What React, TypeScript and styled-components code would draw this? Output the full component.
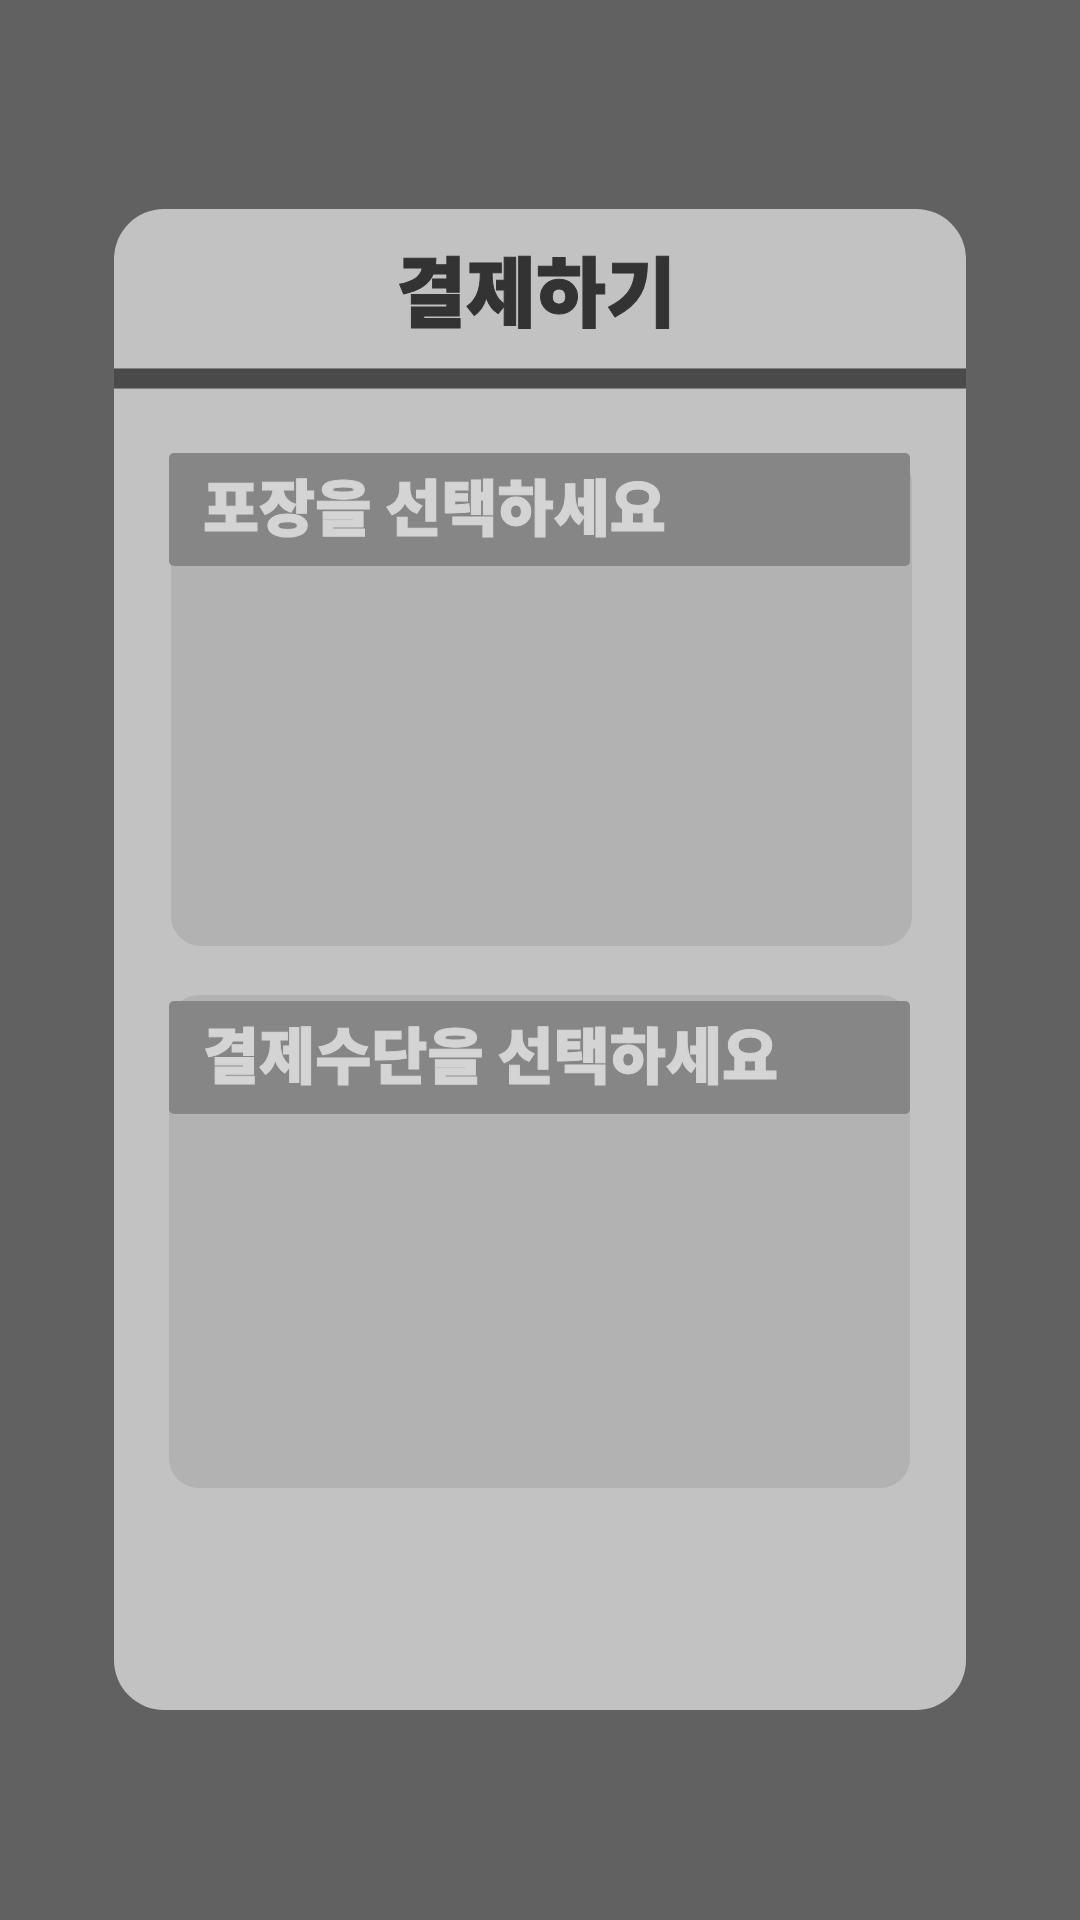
import React from "react";
import styled, { createGlobalStyle } from "styled-components";

const GlobalStyle = createGlobalStyle`
  *, *::before, *::after { box-sizing: border-box; }
  body {
    margin: 0;
    background: #616161;
    font-family: "Noto Sans CJK KR", "Noto Sans", sans-serif;
  }
`;

const Page = styled.main`
  display: flex;
  flex-direction: column;
  justify-content: center;
  min-height: 100vh;
  padding: 64px 114px 66px;
`;

const Dialog = styled.section`
  display: flex;
  flex-direction: column;
  padding-bottom: 222px;
  border-radius: 50px;
  background: #c2c2c2;
`;

const DialogHeader = styled.header`
  display: flex;
  align-items: center;
  justify-content: center;
  height: 159px;
  padding: 0 8px 0 0;
`;

const Divider = styled.hr`
  width: 100%;
  height: 21px;
  margin: 0;
  border: solid #808080;
  border-width: 1px 0;
  background: #4a4a4a;
`;

const Title = styled.h1`
  margin: 0;
  color: #333333;
  font-size: 76px;
  font-weight: 900;
  line-height: 112px;
  -webkit-text-stroke: 1px #333333;
`;

const Sections = styled.div`
  display: flex;
  flex-direction: column;
  gap: 49px;
  padding: 64px 56px 0 55px;
`;

const Panel = styled.section<{ $shift?: number; $inset?: number }>`
  min-height: 493px;
  margin: 0 -${({ $shift = 0 }) => $shift}px 0 ${({ $shift = 0 }) => $shift}px;
  padding: ${({ $inset = 0 }) => $inset}px ${({ $shift = 0 }) => $shift}px 0 0;
  border-radius: 30px;
  background: #b2b2b2;
`;

const PanelHeading = styled.h2<{ $shift?: number }>`
  width: calc(100% + ${({ $shift = 0 }) => $shift}px);
  margin: 0 0 0 -${({ $shift = 0 }) => $shift}px;
  padding: 8px 34px 17px;
  border-radius: 5px;
  background: #868686;
  color: #d4d4d4;
  font-size: 61px;
  font-weight: 900;
  line-height: 88px;
  -webkit-text-stroke: 1px #d4d4d4;
`;

export default function App() {
  return (
    <>
      <GlobalStyle />
      <Page>
        <Dialog aria-labelledby="payment-title">
          <DialogHeader>
            <Title id="payment-title">결제하기</Title>
          </DialogHeader>
          <Divider />
          <Sections>
            <Panel $shift={2} aria-labelledby="packing-title">
              <PanelHeading $shift={2} id="packing-title">
                포장을 선택하세요
              </PanelHeading>
            </Panel>
            <Panel $inset={6} aria-labelledby="method-title">
              <PanelHeading id="method-title">결제수단을 선택하세요</PanelHeading>
            </Panel>
          </Sections>
        </Dialog>
      </Page>
    </>
  );
}
